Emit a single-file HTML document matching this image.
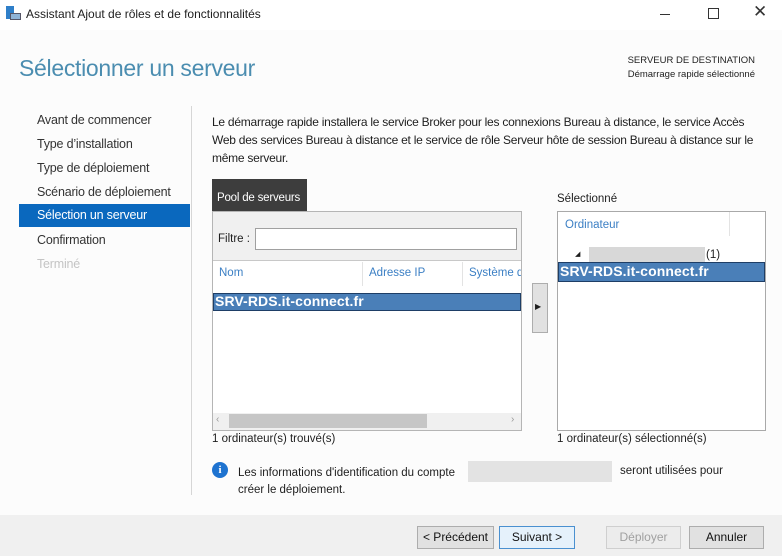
<!DOCTYPE html>
<html><head><meta charset="utf-8"><style>
*{margin:0;padding:0;box-sizing:border-box}
body{width:782px;height:556px;position:relative;background:#fcfcfc;font-family:"Liberation Sans",sans-serif;color:#1e1e1e;overflow:hidden;font-size:12px}
.a{position:absolute;white-space:nowrap}
.nav{left:37px;font-size:12.5px;color:#333;letter-spacing:-0.2px}
.btn{position:absolute;top:526px;height:23px;border:1px solid #adadad;background:#e1e1e1;font-size:12px;text-align:center;line-height:21px;color:#111}
</style></head><body>
<div class="a" style="left:0;top:0;width:782px;height:30px;background:#fff"></div>
<div class="a" style="left:6px;top:6px;width:8px;height:13px;background:#2f7fc9"></div>
<div class="a" style="left:10px;top:13px;width:11px;height:7px;background:#8fb3d6;border:1px solid #556"></div>
<div class="a" style="left:26px;top:7px;font-size:12px">Assistant Ajout de rôles et de fonctionnalités</div>
<div class="a" style="left:660px;top:14px;width:10px;height:1px;background:#333"></div>
<div class="a" style="left:708px;top:8px;width:11px;height:11px;border:1px solid #333"></div>
<div class="a" style="left:753px;top:2px;font-size:17px;color:#333">✕</div>
<div class="a" style="left:19px;top:55px;font-size:23px;color:#4b8db0;letter-spacing:-0.3px">Sélectionner un serveur</div>
<div class="a" style="right:27px;top:54px;font-size:9.5px;text-align:right;line-height:14px;color:#222">SERVEUR DE DESTINATION<br>Démarrage rapide sélectionné</div>
<div class="a nav" style="top:113px">Avant de commencer</div>
<div class="a nav" style="top:137px">Type d’installation</div>
<div class="a nav" style="top:161px">Type de déploiement</div>
<div class="a nav" style="top:185px">Scénario de déploiement</div>
<div class="a" style="left:19px;top:204px;width:171px;height:23px;background:#0a68be"></div>
<div class="a nav" style="top:208px;color:#fff">Sélection un serveur</div>
<div class="a nav" style="top:233px">Confirmation</div>
<div class="a nav" style="top:257px;color:#c4c4c4">Terminé</div>
<div class="a" style="left:191px;top:106px;width:1px;height:389px;background:#d6d6d6"></div>
<div class="a" style="left:212px;top:113px;font-size:12px;line-height:18px;white-space:normal;width:556px;letter-spacing:-0.25px">Le démarrage rapide installera le service Broker pour les connexions Bureau à distance, le service Accès Web des services Bureau à distance et le service de rôle Serveur hôte de session Bureau à distance sur le même serveur.</div>
<div class="a" style="left:212px;top:179px;width:95px;height:33px;background:#3d3d3d"></div>
<div class="a" style="left:217px;top:192px;color:#fff;font-size:11.5px;letter-spacing:-0.2px">Pool de serveurs</div>
<div class="a" style="left:212px;top:211px;width:310px;height:220px;border:1px solid #b5b5b5;background:#fff"></div>
<div class="a" style="left:213px;top:212px;width:308px;height:49px;background:#f0f0f0;border-bottom:1px solid #c8c8c8"></div>
<div class="a" style="left:218px;top:233px;font-size:11.5px">Filtre :</div>
<div class="a" style="left:255px;top:228px;width:262px;height:22px;background:#fff;border:1px solid #a0a0a0"></div>
<div class="a" style="left:219px;top:267px;color:#3b7fc4;font-size:11.5px">Nom</div>
<div class="a" style="left:362px;top:262px;width:1px;height:24px;background:#e3e3e3"></div>
<div class="a" style="left:369px;top:267px;color:#3b7fc4;font-size:11.5px">Adresse IP</div>
<div class="a" style="left:462px;top:262px;width:1px;height:24px;background:#e3e3e3"></div>
<div class="a" style="left:469px;top:267px;color:#3b7fc4;font-size:11.5px;width:52px;overflow:hidden">Système d</div>
<div class="a" style="left:213px;top:293px;width:308px;height:18px;background:#4a7fb8;border:1px solid #1e3e66"></div>
<div class="a" style="left:215px;top:293px;color:#fff;font-size:14px;font-weight:bold;letter-spacing:0.1px">SRV-RDS.it-connect.fr</div>
<div class="a" style="left:213px;top:413px;width:308px;height:17px;background:#f0f0f0"></div>
<div class="a" style="left:229px;top:414px;width:198px;height:14px;background:#c6c6c6"></div>
<div class="a" style="left:216px;top:414px;color:#999;font-size:10px">‹</div>
<div class="a" style="left:511px;top:414px;color:#999;font-size:10px">›</div>
<div class="a" style="left:532px;top:283px;width:16px;height:50px;background:#e1e1e1;border:1px solid #adadad"></div>
<div class="a" style="left:535px;top:302px;font-size:8px">▶</div>
<div class="a" style="left:557px;top:193px;font-size:11.5px">Sélectionné</div>
<div class="a" style="left:557px;top:211px;width:209px;height:220px;border:1px solid #a9a9a9;background:#fff"></div>
<div class="a" style="left:565px;top:219px;color:#3b7fc4;font-size:11.5px">Ordinateur</div>
<div class="a" style="left:729px;top:212px;width:1px;height:24px;background:#e3e3e3"></div>
<div class="a" style="left:575px;top:250px;font-size:7px">◢</div>
<div class="a" style="left:589px;top:247px;width:116px;height:15px;background:#d8d8d8"></div>
<div class="a" style="left:706px;top:249px;font-size:11.5px">(1)</div>
<div class="a" style="left:558px;top:262px;width:207px;height:20px;background:#4a7fb8;border:1px solid #1e3e66"></div>
<div class="a" style="left:560px;top:263px;color:#fff;font-size:14px;font-weight:bold;letter-spacing:0.1px">SRV-RDS.it-connect.fr</div>
<div class="a" style="left:212px;top:433px;font-size:11.5px">1 ordinateur(s) trouvé(s)</div>
<div class="a" style="left:557px;top:433px;font-size:11.5px">1 ordinateur(s) sélectionné(s)</div>
<div class="a" style="left:212px;top:462px;width:16px;height:16px;border-radius:50%;background:#1e73d0;color:#fff;font-weight:bold;font-size:11px;text-align:center;line-height:16px;font-family:'Liberation Serif',serif">i</div>
<div class="a" style="left:238px;top:465px;font-size:11.5px;line-height:17px">Les informations d'identification du compte<br>créer le déploiement.</div>
<div class="a" style="left:468px;top:461px;width:144px;height:21px;background:#e3e3e3"></div>
<div class="a" style="left:620px;top:465px;font-size:11.5px">seront utilisées pour</div>
<div class="a" style="left:0;top:515px;width:782px;height:41px;background:#f0f0f0"></div>
<div class="btn" style="left:417px;width:77px">&lt; Précédent</div>
<div class="btn" style="left:499px;width:76px;border-color:#4a90d0;background:#e5f1fb">Suivant &gt;</div>
<div class="btn" style="left:606px;width:75px;color:#a0a0a0;background:#ececec;border-color:#cfcfcf">Déployer</div>
<div class="btn" style="left:689px;width:75px">Annuler</div>
</body></html>
